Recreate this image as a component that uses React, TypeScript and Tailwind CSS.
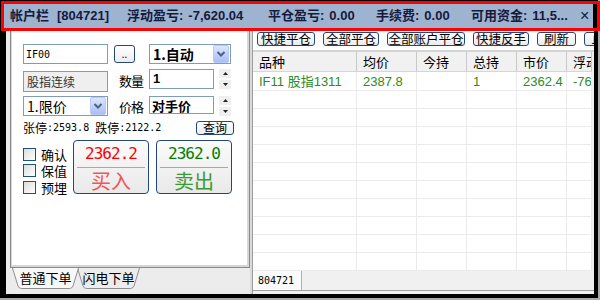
import React from 'react';

const CN = "font-['Noto_Sans_CJK_SC',sans-serif]";
const LAT = "font-['Liberation_Sans','Noto_Sans_CJK_SC',sans-serif]";
const MONO = "font-['DejaVu_Sans_Mono','Noto_Sans_CJK_SC',monospace]";

const HEADERS = ['品种', '均价', '今持', '总持', '市价', '浮动盈亏'];
const ROW = ['IF11 股指1311', '2387.8', '', '1', '2362.4', '-7620.04'];
const GRID = 'grid grid-cols-[104px_60px_50px_50px_50px_25px]';

function ComboArrow() {
  return (
    <div className="w-[16px] h-[18px] rounded-[2px] border border-[#b7caf5] bg-linear-to-b from-[#dbe5fe] to-[#a9bff4] flex items-center justify-center">
      <svg width="10" height="8" viewBox="0 0 10 8">
        <path d="M1.5 2 L5 5.5 L8.5 2" fill="none" stroke="#4d6185" strokeWidth="2" />
      </svg>
    </div>
  );
}

function Spin() {
  return (
    <div className="w-[12px] h-[20px] flex flex-col gap-[2px]">
      <div className="flex-1 bg-[#efefef] flex items-center justify-center">
        <svg width="5" height="3" viewBox="0 0 5 3"><path d="M2.5 0 L5 3 L0 3Z" fill="#222" /></svg>
      </div>
      <div className="flex-1 bg-[#efefef] flex items-center justify-center">
        <svg width="5" height="3" viewBox="0 0 5 3"><path d="M0 0 L5 0 L2.5 3Z" fill="#222" /></svg>
      </div>
    </div>
  );
}

function Check({ label }: { label: string }) {
  return (
    <div className="flex items-center h-[16.5px]">
      <div className="w-[13px] h-[13px] border border-[#1c5180] bg-linear-to-br from-[#dcdcd7] to-white" />
      <span className={`ml-[5px] w-[26px] text-[13px] leading-none text-black ${CN}`}>{label}</span>
    </div>
  );
}

function TradeButton({ price, label, priceColor, labelColor }: { price: string; label: string; priceColor: string; labelColor: string }) {
  return (
    <div className="w-[76px] h-[54px] rounded-[4px] border border-[#24477a] bg-linear-to-b from-[#fbfbfb] to-[#e9e9e9] flex flex-col items-center">
      <div className={`h-[26px] flex items-center text-[16px] tracking-[-1px] ${priceColor} font-['DejaVu_Sans_Mono',monospace]`}>{price}</div>
      <div className="w-[68px] h-px bg-[#a8a8a8]" />
      <div className={`flex-1 flex items-center text-[20px] leading-none ${labelColor} ${CN}`}>{label}</div>
    </div>
  );
}

function ToolButton({ label, w }: { label: string; w: string }) {
  return (
    <div className={`${w} h-[14px] shrink-0 rounded-[3px] border border-[#24477a] bg-linear-to-b from-white to-[#ececec] flex items-center justify-center whitespace-nowrap text-[12.5px] leading-none text-black ${CN}`}>
      {label}
    </div>
  );
}

export default function App() {
  return (
    <div className="relative w-[600px] h-[300px] bg-[#a9a9a9]">
      <div className="w-[598px] h-[298px] bg-black flex flex-col pl-[4px] pt-[4px]">
        {/* account bar */}
        <div className={`h-[24px] w-[589px] bg-[#9db3d0] flex items-center pl-[6px] text-[13px] font-bold text-[#161a3c] whitespace-nowrap ${LAT}`}>
          <span className="w-[47px] shrink-0">帐户栏</span>
          <span className="w-[70px] shrink-0">[804721]</span>
          <span className="w-[141px] shrink-0">浮动盈亏:<span className="ml-[5px]">-7,620.04</span></span>
          <span className="w-[108px] shrink-0">平仓盈亏:<span className="ml-[5px]">0.00</span></span>
          <span className="w-[95px] shrink-0">手续费:<span className="ml-[5px]">0.00</span></span>
          <span className="w-[109px] shrink-0">可用资金:<span className="ml-[5px]">11,5...</span></span>
          <span className="text-[16px] font-normal leading-none">×</span>
        </div>

        <div className="ml-[2px] w-[588px] h-[266px] flex bg-[#ececec]">
          {/* left order panel */}
          <div className="w-[244px] flex flex-col">
            <div className="ml-[4px] w-[240px] h-[240px] border-l border-r border-b border-[#8a8a8a]">
              <div className="h-full border-l border-r-2 border-b-2 border-[#d6d6d6] bg-white pt-[16px] pl-[11px] pr-[13px] text-black">
                {/* row 1 */}
                <div className="flex items-center h-[20px]">
                  <div className={`w-[85px] h-[20px] border border-[#7f9db9] flex items-center pl-[2px] text-[10px] ${MONO}`}>IF00</div>
                  <div className="ml-[6px] w-[21px] h-[18px] rounded-[3px] border border-[#24477a] bg-linear-to-b from-white to-[#ececec] flex items-end justify-center pb-[3px] text-[10px] leading-none">..</div>
                  <div className="ml-[14px] w-[82px] h-[20px] border border-[#7f9db9] flex items-center justify-between pr-[1px]">
                    <span className={`pl-[3px] text-[14px] font-bold leading-none ${CN}`}>1.自动</span>
                    <ComboArrow />
                  </div>
                </div>
                {/* row 2 */}
                <div className="flex items-start h-[23px] mt-[5px]">
                  <div className={`mt-[2px] w-[85px] h-[21px] border border-[#7f9db9] bg-[#efefef] flex items-center pl-[3px] text-[12px] leading-none text-[#333] ${CN}`}>股指连续</div>
                  <div className={`ml-[11px] w-[25px] h-[22px] flex items-center text-[13px] tracking-[-1px] leading-none ${CN}`}>数量</div>
                  <div className={`ml-[5px] w-[65px] h-[20px] border border-[#7f9db9] flex items-center pl-[3px] text-[13px] font-bold ${LAT}`}>1</div>
                  <div className="ml-[5px]"><Spin /></div>
                </div>
                {/* row 3 */}
                <div className="flex items-start h-[20px] mt-[4px]">
                  <div className="w-[85px] h-[20px] border border-[#7f9db9] flex items-center justify-between pr-[1px]">
                    <span className={`pl-[3px] text-[14px] leading-none ${CN}`}>1.限价</span>
                    <ComboArrow />
                  </div>
                  <div className={`ml-[11px] w-[25px] h-[20px] flex items-center text-[13px] tracking-[-1px] leading-none ${CN}`}>价格</div>
                  <div className={`ml-[5px] w-[65px] h-[18px] border border-[#7f9db9] flex items-center pl-[2px] text-[13px] font-bold leading-none ${CN}`}>对手价</div>
                  <div className="ml-[5px]"><Spin /></div>
                </div>
                {/* row 4 */}
                <div className="flex items-center h-[14px] mt-[5px]">
                  <span className={`flex items-center leading-none ${MONO}`}>
                    <span className={`text-[12px] ${CN}`}>张停</span>
                    <span className="text-[10px]">:2593.8</span>
                    <span className={`ml-[6px] text-[12px] ${CN}`}>跌停</span>
                    <span className="text-[10px]">:2122.2</span>
                  </span>
                  <div className={`ml-auto w-[38px] h-[14px] rounded-[3px] border border-[#24477a] bg-linear-to-b from-white to-[#ececec] flex items-center justify-center text-[12px] leading-none ${CN}`}>查询</div>
                </div>
                {/* row 5 */}
                <div className="flex mt-[5px]">
                  <div className="w-[50px] pt-[6px] flex flex-col">
                    <Check label="确认" />
                    <Check label="保值" />
                    <Check label="预埋" />
                  </div>
                  <TradeButton price="2362.2" label="买入" priceColor="text-[#ff0000]" labelColor="text-[#f25555]" />
                  <div className="ml-[7px]">
                    <TradeButton price="2362.0" label="卖出" priceColor="text-[#008000]" labelColor="text-[#3c9a32]" />
                  </div>
                </div>
              </div>
            </div>
            {/* bottom tabs */}
            <div className="h-[26px] flex pl-[6px]">
              <div className="relative z-10 w-[67px] h-[21px] flex justify-center pt-[3px]">
                <svg className="absolute inset-0" width="67" height="21" viewBox="0 0 67 21">
                  <path d="M0.5 0 L6 18 Q7 20.5 9.5 20.5 L57.5 20.5 Q60 20.5 61 18 L66.5 0" fill="#f8f8f8" stroke="#8f8f8f" />
                </svg>
                <span className={`relative text-[13px] leading-none text-black ${CN}`}>普通下单</span>
              </div>
              <div className="relative -ml-[2px] w-[63px] h-[21px] flex justify-center pt-[3px]">
                <svg className="absolute inset-0" width="63" height="21" viewBox="0 0 63 21">
                  <path d="M0.5 0 L6 18 Q7 20.5 9.5 20.5 L53.5 20.5 Q56 20.5 57 18 L62.5 0" fill="#ececec" stroke="#8f8f8f" />
                </svg>
                <span className={`relative text-[13px] leading-none text-black ${CN}`}>闪电下单</span>
              </div>
            </div>
          </div>

          {/* splitter */}
          <div className="w-[3px] bg-[#dadada] border-r border-[#9c9c9c]" />

          {/* positions panel */}
          <div className="w-[341px] flex flex-col bg-[#f0f0f0]">
            <div className="h-[24px] bg-white border-b-2 border-[#d4d4d4] flex pt-[4px] pl-[4px] gap-[8px] overflow-hidden pr-[2px]">
              <ToolButton label="快捷平仓" w="w-[58px]" />
              <ToolButton label="全部平仓" w="w-[56px]" />
              <ToolButton label="全部账户平仓" w="w-[78px]" />
              <ToolButton label="快捷反手" w="w-[56px]" />
              <ToolButton label="刷新" w="w-[39px]" />
              <ToolButton label="止损" w="w-[40px]" />
            </div>
            <div className="w-[339px] h-[219px] bg-white overflow-hidden">
              <div className={`${GRID} h-[20px] bg-[#f1f1f1] border-b border-[#d6d6d6]`}>
                {HEADERS.map((h, i) => (
                  <div key={i} className={`border-r border-[#c8c8c8] pl-[6px] flex items-center overflow-hidden whitespace-nowrap text-[13px] leading-none text-black ${CN}`}>{h}</div>
                ))}
              </div>
              <div className={`${GRID} h-[19px] border-b border-[#ebebeb]`}>
                {ROW.map((c, i) => (
                  <div key={i} className={`border-r border-[#ebebeb] pl-[6px] flex items-center overflow-hidden whitespace-nowrap text-[13px] leading-none text-[#2c8c1c] ${LAT}`}>{c}</div>
                ))}
              </div>
              {Array.from({ length: 10 }).map((_, r) => (
                <div key={r} className={`${GRID} h-[18px] border-b border-[#ebebeb]`}>
                  {HEADERS.map((_, i) => (
                    <div key={i} className="border-r border-[#ebebeb]" />
                  ))}
                </div>
              ))}
            </div>
            <div className="flex-1 flex flex-col">
              <div className="h-[20px] flex border-b border-[#a0a0a0]">
                <div className={`w-[49px] bg-[#fafafa] border-r border-[#b0b0b0] flex items-center pl-[5px] text-[10px] leading-none ${MONO}`}>804721</div>
              </div>
            </div>
          </div>
        </div>
      </div>
      {/* highlight overlay */}
      <div className="absolute left-[1px] top-[1px] w-[599px] h-[30px] border-[3px] border-[#ff0000] pointer-events-none" />
    </div>
  );
}
